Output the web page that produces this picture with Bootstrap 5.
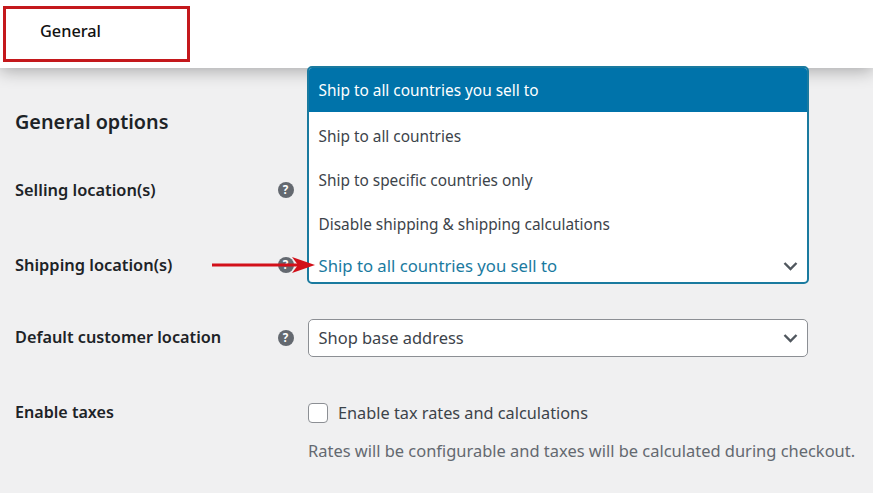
<!DOCTYPE html>
<html lang="en">
<head>
<meta charset="utf-8">
<title>General</title>
<link href="https://cdn.jsdelivr.net/npm/bootstrap@5.3.0/dist/css/bootstrap.min.css" rel="stylesheet">
<style>
html,body{height:100%;}
body{background:#f0f0f1;font-family:"Noto Sans","Open Sans",sans-serif;color:#3c434a;overflow:hidden;position:relative;font-size:16px;}
.top-strip{height:68px;background:#fff;box-shadow:0 3px 16px rgba(0,0,0,.3);padding:6px 0 0 3px;position:relative;}
.tab-box{width:187px;height:56px;border:3px solid #c4181c;color:#111;font-weight:500;font-size:16.3px;padding-left:34px;line-height:45px;}
.settings-grid{display:grid;grid-template-columns:263px 30px 500px;grid-template-rows:111px 75px 66px 81px 37px 40px;padding-left:15px;margin-top:-1px;position:relative;}
.sec-title{grid-column:1;grid-row:1;font-size:19.8px;font-weight:600;color:#1d2327;margin:0;padding-top:41px;line-height:28px;white-space:nowrap;}
.row-sell{grid-row:2;}
.row-ship{grid-row:3;}
.row-default{grid-row:4;}
.row-tax{grid-row:5;}
.row-hint{grid-row:6;}
.field-label{grid-column:1;font-weight:600;font-size:16.4px;color:#1d2327;line-height:24px;}
.field-label.row-default{padding-top:6px;font-size:16.25px;}
.field-label.row-tax{font-size:16.1px;}
.help-cell{grid-column:2;padding-top:4px;}
.help-cell.row-default{padding-top:11px;}
.help-dot{width:16px;height:16px;border-radius:50%;background:#646970;color:#fff;font-size:11.5px;font-weight:700;line-height:16px;text-align:center;display:block;margin-left:-.5px;}
.open-select{grid-column:3;grid-row:1/span 3;height:218px;margin:-1px -1px 0;background:#fff;border:2px solid #1a7a9f;border-radius:5px;overflow:hidden;position:relative;z-index:2;}
.opt-item{padding:2px 0 0 9.5px;height:44px;line-height:44px;font-size:15.4px;color:#3c434a;}
.opt-item.is-active{background:#0073aa;color:#fff;height:44px;margin-bottom:1px;line-height:42px;}
.opt-current{color:#1a7a9f;font-size:16.7px;padding:1px 9px 0 9.5px;height:40px;display:flex;justify-content:space-between;align-items:center;}
.closed-select{grid-column:3;height:38px;background:#fff;border:1px solid #8c8f94;border-radius:5px;padding:0 9px 0 9.5px;font-size:16.45px;color:#3c434a;display:flex;justify-content:space-between;align-items:center;}
.chev{width:15px;height:10px;flex:none;}
.tax-line{grid-column:3;padding-top:3px;}
.tick-box{width:20px;height:20px;background:#fff;border:1px solid #8c8f94;border-radius:4px;flex:none;margin-right:2px;}
.tick-text{font-size:16.3px;color:#3c434a;line-height:20px;}
.hint{grid-column:3;font-size:16.45px;color:#646970;white-space:nowrap;padding-top:2px;}
.red-arrow{position:absolute;left:212px;top:256px;z-index:3;}
</style>
</head>
<body>
<div class="top-strip"><div class="tab-box">General</div></div>
<div class="settings-grid">
  <h2 class="sec-title">General options</h2>
  <div class="field-label row-sell">Selling location(s)</div>
  <div class="help-cell row-sell"><span class="help-dot">?</span></div>
  <div class="field-label row-ship">Shipping location(s)</div>
  <div class="help-cell row-ship"><span class="help-dot">?</span></div>
  <div class="open-select">
    <div class="opt-item is-active">Ship to all countries you sell to</div>
    <div class="opt-item">Ship to all countries</div>
    <div class="opt-item">Ship to specific countries only</div>
    <div class="opt-item">Disable shipping &amp; shipping calculations</div>
    <div class="opt-current"><span>Ship to all countries you sell to</span>
      <svg class="chev" viewBox="0 0 15 10"><path d="M1.5 2 L7.5 8 L13.5 2" fill="none" stroke="#50575e" stroke-width="2.4"/></svg></div>
  </div>
  <div class="field-label row-default">Default customer location</div>
  <div class="help-cell row-default"><span class="help-dot">?</span></div>
  <div class="closed-select row-default"><span>Shop base address</span>
    <svg class="chev" viewBox="0 0 15 10"><path d="M1.5 2 L7.5 8 L13.5 2" fill="none" stroke="#50575e" stroke-width="2.4"/></svg></div>
  <div class="field-label row-tax">Enable taxes</div>
  <div class="tax-line row-tax d-flex align-items-start gap-2"><span class="tick-box"></span><span class="tick-text">Enable tax rates and calculations</span></div>
  <div class="hint row-hint">Rates will be configurable and taxes will be calculated during checkout.</div>
</div>
<svg class="red-arrow" width="106" height="18" viewBox="0 0 106 18"><path d="M0 7.5 H86 V10.5 H0 Z" fill="#d2101a"/><path d="M80 1 L103 9 L80 17 L86 9 Z" fill="#d2101a"/></svg>
<script src="https://cdn.jsdelivr.net/npm/bootstrap@5.3.0/dist/js/bootstrap.bundle.min.js"></script>
</body>
</html>
